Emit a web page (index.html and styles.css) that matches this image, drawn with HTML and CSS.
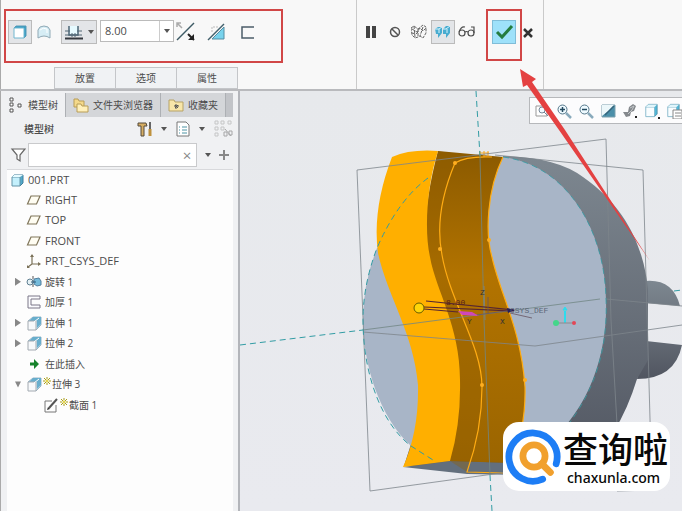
FILE: index.html
```html
<!DOCTYPE html>
<html lang="zh-CN">
<head>
  <meta charset="UTF-8" />
  <meta name="viewport" content="width=device-width, initial-scale=1" />
  <title>001.PRT</title>
  <link rel="stylesheet" href="styles.css">
</head>
<body>

  <!-- Shared icons -->
  <svg class="defs" aria-hidden="true">
    <symbol id="i-plane" viewBox="0 0 16 16"><path d="M5 4h9l-3.500 8h-9z" fill="#fffdf2" stroke="#80765b" stroke-width="1.200"/></symbol>
    <symbol id="i-extrude" viewBox="0 0 16 16">
      <path d="M2 6l5-4h8v8l-5 5" fill="#cfe6f1" stroke="#9ab4c4"/>
      <path d="M7 2h8v7l-4 4V6H3z" fill="#68aecd"/>
      <path d="M2 6h8v9H2z" fill="#f7f9fb" stroke="#a3aab1"/>
      <path d="M8 7l5-4" stroke="#fff"/>
    </symbol>
    <symbol id="i-star" viewBox="0 0 8 8"><path d="M1 1l2 2M7 1L5 3M1 7l2-2M7 7L5 5M4 0v2M4 6v2M0 4h2M6 4h2" stroke="#a99d18"/><path d="M3 3h2v2H3z" fill="#fff47a" stroke="#cbbb1b" stroke-width=".6"/></symbol>
    <symbol id="i-cube" viewBox="0 0 16 16"><path d="M3 5l2-2h9v8l-3 3" fill="#53a9ca" stroke="#417f9b"/><path d="M3 5h8v9H3z" fill="#c4f0fc" stroke="#6594a8"/><path d="M3 5l2-2h9l-3 2z" fill="#e6fbff"/></symbol>
    <symbol id="i-box" viewBox="0 0 16 16"><path d="M2 4l3-3h10v11l-3 3" fill="#4fb9d9" stroke="#528fa8"/><path d="M2 4h10v11H2z" fill="#f9fdff" stroke="#7fb5ca"/><path d="M2 4l3-3h10l-3 3z" fill="#e0f5fb"/></symbol>
  </svg>

  <header class="ribbon">
    <section class="group feature">
      <div class="options">
        <button class="tool on" aria-label="实体"><svg viewBox="0 0 16 16"><path d="M2 4l2-2h10v10l-2 2z" fill="#359ec5" stroke="#5799b6"/><path d="M2 4h10v10H2z" fill="#fff" stroke="#70b7d0"/></svg></button>
        <button class="tool" aria-label="曲面"><svg viewBox="0 0 16 16"><path d="M2 6Q3 2 8 2q5 0 6 4v8q-6-4-12 0z" fill="#d6edf5" stroke="#90a9b5"/><path d="M4 6q3-3 7-1v4" fill="none" stroke="#fff"/></svg></button>
        <button class="tool split on" aria-label="深度">
          <svg class="wide" viewBox="0 0 20 16"><path d="M1 14.500h18" stroke="#34383f" stroke-width="2"/><path d="M5 2v9h9V2" fill="#e6faff" stroke="#4c6576" stroke-width="1.500"/><path d="M1 7h5M1 11h17M13 7h5M8 9v4M11 9v4" stroke="#526876"/></svg>
          <span class="caret"></span>
        </button>
        <div class="depth"><input type="text" value="8.00" aria-label="深度值"><button aria-label="深度列表"><span class="caret"></span></button></div>
        <button class="tool" aria-label="反向"><svg class="big" viewBox="0 0 20 20"><path d="M1 18L18 1" stroke="#3d5a65" stroke-width="1.500"/><path d="M6 6L1 1M1 5V1h4" fill="none" stroke="#aaa" stroke-width="1.500"/><path d="M12 12l6 6" stroke="#222" stroke-width="2"/><path d="M18 12v6h-6z" fill="#222"/></svg></button>
        <button class="tool" aria-label="移除材料"><svg class="big" viewBox="0 0 20 20"><path d="M5 17L17 5v12z" fill="#78d3ed" stroke="#548da2"/><path d="M5 10V5h6" fill="none" stroke="#bbb" stroke-dasharray="2 1"/><path d="M1 18L17 2" stroke="#42606c" stroke-width="1.500"/></svg></button>
        <button class="tool" aria-label="加厚草绘"><svg viewBox="0 0 16 16"><path d="M14 3H2v11h12" fill="none" stroke="#4b5c68" stroke-width="1.500"/></svg></button>
      </div>
      <nav class="panels">
        <button>放置</button><button>选项</button><button>属性</button>
      </nav>
    </section>
    <section class="group confirm">
      <button class="tool" aria-label="暂停"><svg viewBox="0 0 16 16"><path d="M3 2h4v12H3zM9 2h4v12H9z" fill="#444"/></svg></button>
      <button class="tool" aria-label="无预览"><svg viewBox="0 0 16 16"><circle cx="8" cy="8" r="4.500" fill="none" stroke="#555" stroke-width="1.500"/><path d="M5 5l6 6" stroke="#555" stroke-width="1.500"/></svg></button>
      <button class="tool" aria-label="分离"><svg viewBox="0 0 16 16"><path d="M0 4l3-2 4 3 5-4 3 2v6l-3 5-3-2-2 1-3 1-3-3zM3 2l1 11M7 5v7M12 3l-3 9M1 5l5 3 3-4 3 3 3-3M1 9l4 1 3-3" fill="none" stroke="#656565" stroke-dasharray="3 1"/></svg></button>
      <button class="tool on" aria-label="连接"><svg viewBox="0 0 16 16"><path d="M0 5l3-2h4v6l-4 5v-4H1zM8 5l3-3h4v7l-4 5v-4H8z" fill="#49acd0"/><path d="M0 5h4l3-2M8 5h3l4-3M4 5v4M12 5v4" fill="none" stroke="#d6f5ff"/></svg></button>
      <button class="tool" aria-label="预览"><svg class="wide" viewBox="0 0 20 16"><g fill="none" stroke="#4d4d4d" stroke-width="1.200"><circle cx="5" cy="9" r="3"/><circle cx="14" cy="9" r="3"/><path d="M8 8q1.500-1 3 0M2 8Q4 2 8 3M17 9V3h-3"/></g></svg></button>
      <button class="tool ok" aria-label="确定"><svg class="big" viewBox="0 0 20 20"><path d="M3 10l5 5L18 4" fill="none" stroke="#257c3f" stroke-width="3"/></svg></button>
      <button class="tool cancel" aria-label="取消"><svg viewBox="0 0 10 16"><path d="M1 5l8 8M9 5l-8 8" stroke="#333" stroke-width="2.500"/></svg></button>
    </section>
  </header>

  <main>
    <aside class="navigator">
      <nav class="tabs">
        <button class="active"><svg viewBox="0 0 16 16"><path d="M2 1h3v3H2zM2 6h3v3H2zM2 12h3v3H2zM10 7h3v3h-3z" fill="#fff" stroke="#555"/></svg>模型树</button>
        <button><svg viewBox="0 0 16 16"><path d="M1 2h4l1 2h5v6H1z" fill="#f4d98a" stroke="#b89d57"/><path d="M4 7h4l1 2h6v6H4z" fill="#fff0ba" stroke="#b89d57"/></svg>文件夹浏览器</button>
        <button><svg viewBox="0 0 16 16"><path d="M1 3h5l1 2h8v9H1z" fill="#f8e6a9" stroke="#b7a366"/><path d="M8 7v5M6 9h5M7 8l3 3M10 8l-3 3" stroke="#555"/></svg>收藏夹</button>
      </nav>
      <div class="tree-bar">
        <h1>模型树</h1>
        <button aria-label="设置"><svg viewBox="0 0 16 16"><path d="M1 2h8l1 3H7v10H4V5H1z" fill="#d5ad63" stroke="#544b3c"/><path d="M13 1v7" stroke="#666" stroke-width="2"/><path d="M13 8v7" stroke="#bf923e" stroke-width="3"/></svg><span class="caret"></span></button>
        <button aria-label="显示"><svg viewBox="0 0 16 16"><path d="M2 1h9l3 3v11H2z" fill="#fff" stroke="#777"/><path d="M4 6h1M4 9h1M4 12h1M7 6h5M7 9h5M7 12h5" stroke="#4c94a5"/></svg><span class="caret"></span></button>
        <button class="off" aria-label="查找"><svg class="big" viewBox="0 0 20 20"><path d="M2 2h3v3H2zM2 8h3v3H2zM2 14h3v3H2zM8 2h3v3H8zM8 8h3v3H8zM15 2h3v3h-3z" fill="none" stroke="#aaa"/><path d="M12 10l6 7M11 13h3v4h-3zM16 12h3v4h-3z" fill="none" stroke="#777"/></svg></button>
      </div>
      <div class="search">
        <svg viewBox="0 0 16 16"><path d="M2 2h13L10 8v6l-3-2V8z" fill="#fff" stroke="#666" stroke-width="1.200"/></svg>
        <div class="field"><input type="text" aria-label="搜索模型树"><button aria-label="清除">×</button></div>
        <button aria-label="搜索选项"><span class="caret"></span></button>
        <button aria-label="添加"><svg class="plus" viewBox="0 0 10 10"><path d="M5 0v10M0 5h10" stroke="#888" stroke-width="2"/></svg></button>
      </div>
      <ul class="tree">
        <li class="root latin"><svg><use href="#i-cube"/></svg>001.PRT</li>
        <li class="latin"><svg><use href="#i-plane"/></svg>RIGHT</li>
        <li class="latin"><svg><use href="#i-plane"/></svg>TOP</li>
        <li class="latin"><svg><use href="#i-plane"/></svg>FRONT</li>
        <li class="latin"><svg viewBox="0 0 16 16"><path d="M6 2v9h8M6 11l-4 3" fill="none" stroke="#7b7259" stroke-width="1.200"/><path d="M4 4l2-3 2 3zM12 9l3 2-3 2zM1 12v3h3z" fill="#7b7259"/></svg>PRT_CSYS_DEF</li>
        <li><i class="arrow"></i><svg viewBox="0 0 16 16"><path d="M7 2v12" stroke="#555" stroke-dasharray="3 1"/><ellipse cx="4" cy="8" rx="3" ry="3" fill="#e5f1f5" stroke="#607f91"/><path d="M8 5l5-1 2 3v4l-4 1-3-2z" fill="#75bbdb" stroke="#537f9d"/><path d="M5 8h5" stroke="#315d7b"/></svg>旋转 1</li>
        <li><svg viewBox="0 0 16 16"><path d="M14 2H2v12h12v-3H5V5h9z" fill="#fbfbfe" stroke="#7a7787"/></svg>加厚 1</li>
        <li><i class="arrow"></i><svg><use href="#i-extrude"/></svg>拉伸 1</li>
        <li><i class="arrow"></i><svg><use href="#i-extrude"/></svg>拉伸 2</li>
        <li><svg viewBox="0 0 16 16"><path d="M4 6.500h4V3l5 5-5 5V9.500H4z" fill="#16822b"/></svg>在此插入</li>
        <li><i class="arrow open"></i><svg><use href="#i-extrude"/></svg><svg class="star"><use href="#i-star"/></svg>拉伸 3</li>
        <li class="child"><svg viewBox="0 0 16 16"><path d="M9 4H2v11h11V8" fill="none" stroke="#777"/><path d="M6 11l8-9" stroke="#555" stroke-width="2"/><path d="M4 13l1-3 2 2z" fill="#333"/></svg><svg class="star"><use href="#i-star"/></svg>截面 1</li>
      </ul>
    </aside>

    <section class="view">
      <svg class="model" viewBox="240 91 442 420" preserveAspectRatio="xMinYMin slice" role="img" aria-label="零件模型">
        <defs>
          <linearGradient id="rim" x1="0" y1="0" x2="0" y2="1"><stop offset="0" stop-color="#7d8790"/><stop offset=".55" stop-color="#666d77"/><stop offset="1" stop-color="#505560"/></linearGradient>
          <linearGradient id="cut" x1="0" y1="0" x2="0" y2="1"><stop offset="0" stop-color="#8b5a00"/><stop offset=".4" stop-color="#b27300"/><stop offset="1" stop-color="#9b6500"/></linearGradient>
        </defs>
        <!-- fins and rim -->
        <path d="M646 281Q673 279 680 306L646 303zM646 341l36 4Q675 379 637 379z" fill="url(#rim)"/>
        <path d="M503 156Q557 157 583 177C632 211 645 257 648 290V360L637 379Q619 438 580 472H480L404 466Z" fill="url(#rim)"/>
        <!-- front face -->
        <path d="M503 157C566 165 605 229 606 300C608 363 582 431 520 461L450 461L410 445C380 417 363 365 363 320Q363 283 377 248L480 156z" fill="#a8b5c7"/>
        <path d="M403 467l48-6 69 2v12l-53-1z" fill="#636f7d"/>
        <!-- extrusion -->
        <path d="M438 151l22 2 43 4C487 190 485 233 492 257C500 294 521 328 525 387Q526 428 511 463L450 461V330L428 257Q420 220 438 151z" fill="url(#cut)"/>
        <path d="M438 151l22 4-5 8C438 202 436 230 442 255C450 302 482 346 482 387Q482 430 467 472L450 461V330L428 257Q420 220 438 151z" fill="#915e00" opacity=".35"/>
        <path d="M392 157Q410 149 438 151C427 185 424 230 430 257C436 291 460 326 460 380Q461 423 450 461L403 467Q419 431 418 385C414 334 387 295 378 253Q372 209 392 157z" fill="#ffaf00"/>
        <path d="M503 157C487 190 485 233 492 257C500 294 521 328 525 387Q526 428 511 463M492 157Q466 156 455 163C439 201 437 230 442 255C450 302 482 346 482 387Q482 430 467 472l36 1" fill="none" stroke="#ffac13" stroke-width="1.200"/>
        <path d="M480 156v-5M484 157v-6M488 156v-5M479 153h10" fill="none" stroke="#f6a51c"/>
        <g fill="#ffae20"><circle cx="455" cy="163" r="2"/><circle cx="440" cy="249" r="2"/><circle cx="489" cy="240" r="2"/><circle cx="482" cy="385" r="2"/><circle cx="525" cy="380" r="2"/></g>
        <!-- datum planes -->
        <path d="M357 170L606 139L611 320L617 424M357 170l13 321 160-22M495 155l148 15 9 320-35 1M363 332l172 14 147-21M606 299l76 7M484 286l1 34" fill="none" stroke="#7d858b" stroke-width=".8"/>
        <g fill="none" stroke="#329ca4" stroke-dasharray="6 4">
          <path d="M476 91l4 65M490 475l2 36M240 345l123-15M674 291l8-1"/>
          <path d="M428 178Q398 200 377 248Q363 285 363 320C363 375 382 424 411 446l22 14"/>
          <path d="M503 157C566 165 605 229 606 300C608 350 594 390 570 422" stroke-width=".8"/>
        </g>
        <path d="M480 156l4 164 6 155M363 330l237-31" fill="none" stroke="#718684" stroke-width=".8"/>
        <!-- depth handle and csys -->
        <path d="M424 307l90 4M426 301l88 9M424 309l34 3" fill="none" stroke="#572630" stroke-width="1.200"/>
        <path d="M458 311l14 1 7 4-17-1z" fill="#cf47bb"/><path d="M477 315l36-5M488 297v16M510 313l22 5" stroke="#675360" stroke-width=".8"/>
        <path d="M507 308l8 2-7 3z" fill="#24205e"/>
        <circle cx="419" cy="308" r="5" fill="#ffd50a" stroke="#655c00"/>
        <g class="labels"><text x="446" y="305" fill="#56201e">8.00</text><text x="480" y="295">Z</text><text x="467" y="324">Y</text><text x="500" y="324">X</text><text x="510" y="313" fill="#5a6577">CSYS_DEF</text></g>
        <path d="M565 311v12" stroke="#2edced" stroke-width="2"/><path d="M563 310l2-3 2 3z" fill="#2edced" stroke="#2edced"/><path d="M557 323l16 0" stroke="#898c8e"/><circle cx="556" cy="323" r="3" fill="#45d68a"/><circle cx="574" cy="323" r="2" fill="#e34757"/>
      </svg>

      <div class="view-bar">
        <button aria-label="重新调整"><svg viewBox="0 0 16 16"><path d="M2 3h11v10H2z" fill="#fff" stroke="#999"/><circle cx="8" cy="7" r="3" fill="#f1faff" stroke="#789"/><path d="M10 9l4 4" stroke="#789"/></svg></button>
        <button aria-label="放大"><svg viewBox="0 0 16 16"><path d="M10 10l5 5" stroke="#89aabc" stroke-width="2.500"/><circle cx="6.500" cy="6.500" r="4.500" fill="#eefaff" stroke="#547689"/><path d="M4 6.500h5M6.500 4v5" stroke="#234a60" stroke-width="1.500"/></svg></button>
        <button aria-label="缩小"><svg viewBox="0 0 16 16"><path d="M10 10l5 5" stroke="#89aabc" stroke-width="2.500"/><circle cx="6.500" cy="6.500" r="4.500" fill="#eefaff" stroke="#547689"/><path d="M4 6.500h5" stroke="#234a60" stroke-width="1.500"/></svg></button>
        <button aria-label="重画"><svg viewBox="0 0 16 16"><path d="M2 2h13v12H2z" fill="#4b8fa9" stroke="#7a9fad"/><path d="M2 2h12Q9 8 2 13z" fill="#ecf7fa"/><path d="M5 12l9-9" stroke="#36647b" stroke-width="1.500"/></svg></button>
        <button aria-label="渲染"><svg viewBox="0 0 16 16"><path d="M1 9h5l1-5 4-3 3 2-2 5-3 1-1 4-4 1z" fill="#85898d"/><path d="M8 5l4-2-2 4-4 4" fill="none" stroke="#c3c7ca"/><path d="M13 13h2v2h-2z" fill="#222"/></svg></button>
        <button aria-label="显示样式"><svg viewBox="0 0 16 16"><use href="#i-box" width="14" height="15"/><path d="M14 14h2v2h-2z" fill="#222"/></svg></button>
        <button aria-label="已保存方向"><svg viewBox="0 0 16 16"><use href="#i-box" width="14" height="15"/><path d="M7 7h9v9H7z" fill="#fff" stroke="#888"/><path d="M9 10h6M9 13h6" stroke="#888"/></svg></button>
      </div>

      <div class="brand">
        <svg viewBox="0 0 56 56"><path d="M37 51A25 25 0 1 1 51 35" fill="none" stroke="#1d7df5" stroke-width="7" stroke-linecap="round"/><circle cx="28" cy="27" r="11.500" fill="#fff" stroke="#f1a02d" stroke-width="7"/><path d="M36 35l9 9" stroke="#f1a02d" stroke-width="7" stroke-linecap="round"/></svg>
        <div><strong>查询啦</strong><span>chaxunla.com</span></div>
      </div>
    </section>
  </main>

  <!-- Arrow pointing at the confirm button -->
  <svg class="pointer" viewBox="0 0 140 200" aria-hidden="true"><path d="M9 3l3 18 4-2 32 45 91 131L54 64 21 16l4-3z" fill="#e44141"/></svg>

</body>
</html>
```
FILE: styles.css
```css
:root {
  --ribbon: #f8f8f8;
  --line: #b9babd;
  --pane: #f0f1f3;
  --text: #4c4c4c;
  --mark: #d14747;
}

* {
  box-sizing: border-box;
}

body {
  margin: 0;
  height: 100vh;
  display: flex;
  flex-direction: column;
  position: relative;
  overflow: hidden;
  font: 10px/16px "Open Sans", "Noto Sans CJK SC", sans-serif;
  color: var(--text);
  background: #e8eaed;
}

button {
  display: flex;
  align-items: center;
  justify-content: center;
  padding: 0;
  border: 0;
  background: none;
  font: inherit;
  color: inherit;
}

input {
  min-width: 0;
  flex: 1;
  border: 0;
  padding: 0 4px;
  background: none;
  font: inherit;
  color: inherit;
}

svg {
  width: 16px;
  height: 16px;
  flex: none;
}

svg.big {
  width: 20px;
  height: 20px;
}

svg.wide {
  width: 20px;
}

.defs {
  position: absolute;
  width: 0;
  height: 0;
}

.caret {
  border: 3px solid transparent;
  border-top: 4px solid #555;
  border-bottom: 0;
}

/* Ribbon */
.ribbon {
  display: flex;
  flex: none;
  height: 91px;
  background: var(--ribbon);
  border-bottom: 2px solid var(--line);
}

.group {
  border-right: 1px solid #cacaca;
}

.feature {
  width: 357px;
  display: flex;
  flex-direction: column;
  justify-content: space-between;
  padding: 9px 0 0 3px;
  border-left: 1px solid #aaa;
}

.options {
  width: 279px;
  height: 54px;
  display: flex;
  align-items: flex-start;
  padding: 9px 2px;
  border: 2px solid var(--mark);
}

.tool {
  width: 24px;
  height: 24px;
  border: 1px solid transparent;
}

.tool.on {
  background: #e3e5e8;
  border-color: #bbb;
}

.options .split {
  width: 36px;
  margin: 0 3px 0 5px;
  gap: 4px;
}

.depth {
  width: 74px;
  height: 22px;
  display: flex;
  border: 1px solid #bbb;
  background: #fff;
  font-size: 11px;
}

.depth button {
  width: 14px;
  border-left: 1px solid #ccc;
}

.options .depth ~ .tool {
  margin-right: 7px;
}

.panels {
  display: flex;
  margin-left: 50px;
}

.panels button {
  width: 61px;
  height: 22px;
  background: #f0f2f4;
  border: 1px solid #c4c6c9;
  border-right: 0;
}

.panels button:last-child {
  width: 62px;
  border-right: 1px solid #c4c6c9;
}

.confirm {
  width: 187px;
  display: flex;
  align-items: flex-start;
  padding: 20px 0 0 2px;
}

.confirm .ok {
  position: relative;
  background: #9ee1fa;
  border-color: #80bdd8;
  margin: 0 5px 0 13px;
}

.confirm .ok::after {
  content: "";
  position: absolute;
  inset: -12px -7px -18px;
  border: 2px solid var(--mark);
}

.confirm .cancel {
  width: 10px;
  margin-left: 2px;
}

.confirm .cancel svg {
  width: 10px;
}

/* Navigator */
main {
  flex: 1;
  min-height: 0;
  display: flex;
}

.navigator {
  width: 240px;
  flex: none;
  display: flex;
  flex-direction: column;
  padding: 2px 5px 0 0;
  background: var(--pane);
  border-left: 1px solid #aaa;
  border-right: 2px solid #b3b5ba;
}

.tabs {
  display: flex;
  height: 24px;
  background: #c2c4c8;
}

.tabs button {
  gap: 4px;
  width: 65px;
  background: #d4d6d9;
  border-right: 1px solid #adb0b4;
}

.tabs button.active {
  background: var(--pane);
}

.tabs button:nth-child(2) {
  width: 95px;
}

.tree-bar {
  height: 24px;
  display: flex;
  align-items: center;
  gap: 6px;
  padding-left: 23px;
}

.tree-bar h1 {
  flex: 1;
  margin: 0;
  font-size: 10px;
  font-weight: 500;
}

.tree-bar button {
  gap: 8px;
  margin-left: 2px;
}

.off {
  opacity: 0.6;
}

.search {
  height: 28px;
  display: flex;
  align-items: center;
  gap: 8px;
  padding-left: 9px;
}

.search .field {
  width: 169px;
  height: 24px;
  display: flex;
  margin-left: -6px;
  background: #fff;
  border: 1px solid #c9cacc;
}

.field button {
  width: 18px;
  font-size: 15px;
  color: #888;
}

.search svg.plus {
  width: 10px;
  height: 10px;
}

.tree {
  flex: none;
  display: grid;
  grid-auto-rows: 1fr;
  height: 246px;
  margin: 0 0 0 6px;
  padding: 0;
  list-style: none;
}

.navigator::after {
  content: "";
  flex: 1;
  margin-left: 6px;
  background: #fdfdfd;
}

.tree li {
  display: flex;
  align-items: center;
  padding-left: 19px;
  gap: 3px;
  background: #fdfdfd;
}

.tree .latin {
  font-size: 11px;
}

.tree .root {
  padding-left: 2px;
  border-top: 1px solid #d8d9dc;
}

.tree .child {
  padding-left: 36px;
}

.tree .star {
  width: 8px;
  height: 8px;
  margin: 0 -2px 6px -2px;
}

.arrow {
  width: 6px;
  height: 8px;
  margin: 0 2px 0 -11px;
  background: #888;
  clip-path: polygon(0 0, 100% 50%, 0 100%);
}

.arrow.open {
  clip-path: polygon(0 15%, 100% 15%, 50% 90%);
}

/* Graphics area */
.view {
  flex: 1;
  min-width: 0;
  position: relative;
  background: linear-gradient(#e7e9ec, #e9eaef);
}

.model {
  display: block;
  width: 100%;
  height: 100%;
}

.labels {
  font: 8px "Liberation Mono", monospace;
  fill: #333;
}

.view-bar {
  position: absolute;
  top: 6px;
  right: 0;
  width: 153px;
  height: 27px;
  display: flex;
  align-items: center;
  gap: 6px;
  padding-left: 4px;
  overflow: hidden;
  background: #fcfcfd;
  border: 1px solid #b6b8bb;
  border-right: 0;
}

.brand {
  position: absolute;
  right: 12px;
  bottom: 20px;
  width: 167px;
  height: 69px;
  display: flex;
  align-items: center;
  gap: 2px;
  padding-left: 4px;
  border-radius: 16px;
  background: #fff;
  color: #080808;
  white-space: nowrap;
}

.brand svg {
  width: 54px;
  height: 54px;
  overflow: visible;
}

.brand div {
  display: flex;
  flex-direction: column;
}

.brand strong {
  font: 500 35px/42px "Noto Sans CJK SC", sans-serif;
}

.brand span {
  padding-left: 4px;
  font: 500 14px/18px "Noto Sans", sans-serif;
}

.pointer {
  position: absolute;
  left: 511px;
  top: 66px;
  width: 140px;
  height: 200px;
}
```
